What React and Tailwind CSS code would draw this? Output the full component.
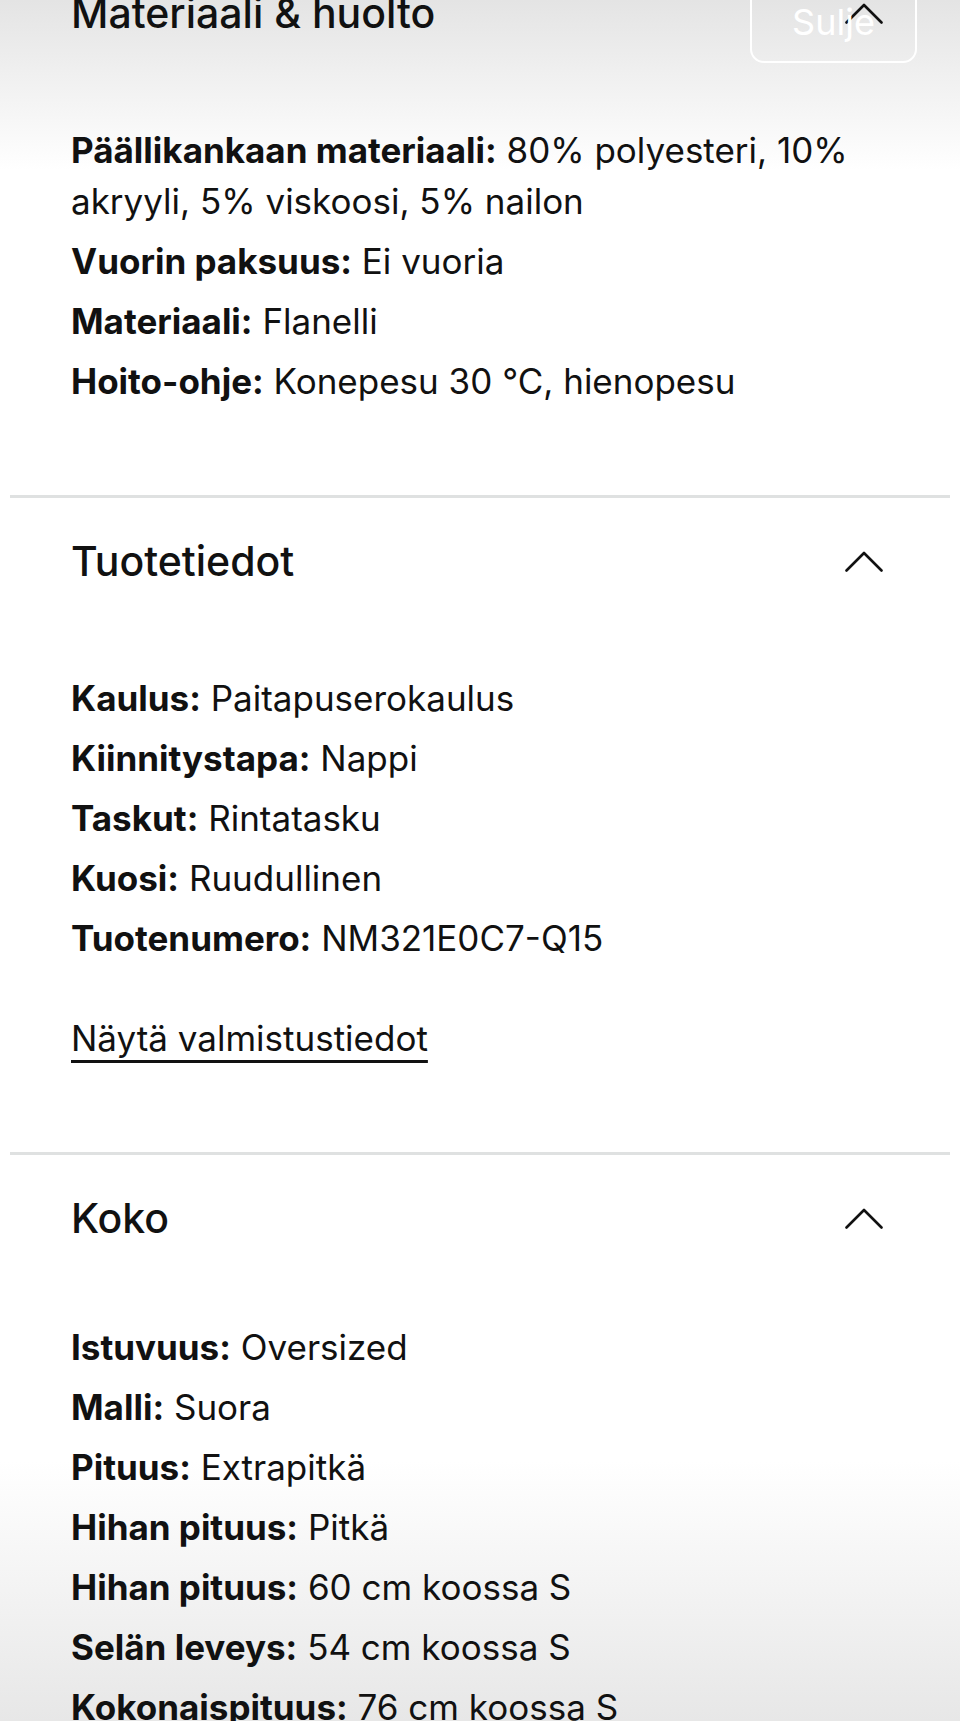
import React from "react";

function Chevron() {
  return (
    <svg width="38" height="21" viewBox="0 0 38 21" fill="none" className="shrink-0">
      <path d="M1.5 19.5 L19 2 L36.5 19.5" stroke="#111111" strokeWidth="2.6" strokeLinecap="round" strokeLinejoin="round" />
    </svg>
  );
}

function Item({ label, value }) {
  return (
    <p className="text-[35px] leading-[51px]">
      <span className="font-bold">{label}</span> {value}
    </p>
  );
}

function Section({ title, items, children, first, last, gapTop = "mt-[87px]" }) {
  return (
    <section
      className={
        (first ? "mt-[-12px] pt-0 " : "pt-[38px] ") +
        (last ? "" : "border-b-[3px] border-[#dfe1e1] pb-[88px] ") +
        "pl-[61px] pr-[67px]"
      }
    >
      <div className="flex h-[50px] items-center justify-between">
        <h2 className="text-[41px] font-medium leading-[50px]">{title}</h2>
        <Chevron />
      </div>
      <div className={gapTop + " flex flex-col gap-[9px]"}>
        {items.map((it, i) => (
          <Item key={i} label={it[0]} value={it[1]} />
        ))}
      </div>
      {children}
    </section>
  );
}

export default function App() {
  return (
    <div className="relative h-[1721px] w-[960px] overflow-hidden bg-white font-['Inter',_sans-serif] text-[#111111]">
      <div className="pointer-events-none absolute inset-x-0 top-0 h-[170px] bg-gradient-to-b from-[#e4e4e4] to-white" />
      <div className="pointer-events-none absolute inset-x-0 bottom-0 h-[260px] bg-gradient-to-t from-[#e7e7e7] to-white" />

      <div className="relative px-[10px]">
        <Section
          first
          title="Materiaali & huolto"
          items={[
            ["Päällikankaan materiaali:", "80% polyesteri, 10% akryyli, 5% viskoosi, 5% nailon"],
            ["Vuorin paksuus:", "Ei vuoria"],
            ["Materiaali:", "Flanelli"],
            ["Hoito-ohje:", "Konepesu 30 °C, hienopesu"],
          ]}
        />
        <Section
          title="Tuotetiedot"
          items={[
            ["Kaulus:", "Paitapuserokaulus"],
            ["Kiinnitystapa:", "Nappi"],
            ["Taskut:", "Rintatasku"],
            ["Kuosi:", "Ruudullinen"],
            ["Tuotenumero:", "NM321E0C7-Q15"],
          ]}
        >
          <div className="mt-[49px]">
            <a className="text-[35px] leading-[51px] underline decoration-[2.5px] underline-offset-[9px]">
              Näytä valmistustiedot
            </a>
          </div>
        </Section>
        <Section
          last
          title="Koko"
          gapTop="mt-[79px]"
          items={[
            ["Istuvuus:", "Oversized"],
            ["Malli:", "Suora"],
            ["Pituus:", "Extrapitkä"],
            ["Hihan pituus:", "Pitkä"],
            ["Hihan pituus:", "60 cm koossa S"],
            ["Selän leveys:", "54 cm koossa S"],
            ["Kokonaispituus:", "76 cm koossa S"],
          ]}
        />
      </div>

      <div className="absolute left-[750px] top-[-30px] flex h-[93px] w-[167px] items-center justify-center rounded-[14px] border-2 border-white pt-[10px]">
        <span className="text-[36px] leading-none text-white">Sulje</span>
      </div>
    </div>
  );
}
